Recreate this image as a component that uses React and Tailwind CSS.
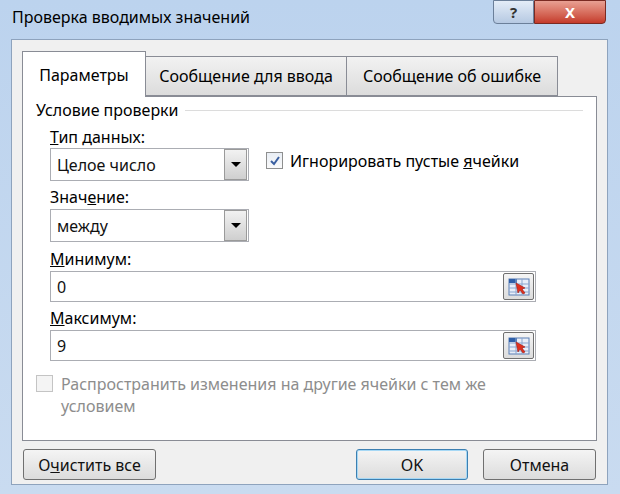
export default function App() {
  const Combo = ({ value }) => (
    <div className="flex w-[199px] h-[33px] border border-[#abadb3] bg-white items-center">
      <span className="flex-1 pl-[6px] text-[16px] text-[#111]">{value}</span>
      <div className="w-[23px] h-[31px] mr-[1px] border border-[#9a9a9a] bg-gradient-to-b from-[#f2f2f2] to-[#cfcfcf] flex items-center justify-center">
        <div className="w-0 h-0 border-l-[5px] border-r-[5px] border-t-[5px] border-l-transparent border-r-transparent border-t-black" />
      </div>
    </div>
  );
  const RangeBtn = () => (
    <div className="w-[31px] h-[27px] border border-[#707070] rounded-[2px] bg-gradient-to-b from-[#f5f5f5] to-[#dcdcdc] flex items-center justify-center mr-[1px]">
      <svg width="22" height="18" viewBox="0 0 22 18">
        <rect x="1" y="1" width="20" height="16" fill="#e8eef8" stroke="#5a7fb5" strokeWidth="1" />
        <rect x="1" y="1" width="8" height="4" fill="#2f5fa8" />
        <path d="M1 6h20M1 10h20M1 14h20M8 1v16M14 1v16" stroke="#8aa6cf" strokeWidth="1" />
        <path d="M8 5l9 5-3 1 3 4-2 1-3-4-2 3z" fill="#e0301e" stroke="#a01a10" strokeWidth="0.6" />
      </svg>
    </div>
  );
  const Input = ({ value }) => (
    <div className="flex w-[486px] h-[31px] border border-[#abadb3] bg-white items-center">
      <span className="flex-1 pl-[6px] text-[16px] text-[#111]">{value}</span>
      <RangeBtn />
    </div>
  );
  const Btn = ({ children, w, focus }) => (
    <div className={`h-[31px] ${w} rounded-[3px] border ${focus ? "border-[#3c7fb1] shadow-[inset_0_0_0_1px_#a6d8f5]" : "border-[#707070]"} bg-gradient-to-b from-[#f4f4f4] to-[#dcdcdc] flex items-center justify-center text-[16px] text-[#111]`}>
      {children}
    </div>
  );
  return (
    <div className="w-[620px] h-[494px] bg-gradient-to-b from-[#bcd3ee] to-[#c9dbf0] relative overflow-hidden" style={{ fontFamily: '"Noto Sans", "Open Sans", sans-serif' }}>
      <div className="h-[40px] flex items-start">
        <span className="pl-[12px] pt-[5px] text-[16px] text-black">Проверка вводимых значений</span>
        <div className="ml-auto flex mr-[14px]">
          <div className="w-[41px] h-[24px] border border-[#6b7f99] rounded-bl-[4px] bg-gradient-to-b from-[#e4edf8] to-[#b6c9e2] flex items-center justify-center text-[15px] text-[#333] font-bold">?</div>
          <div className="w-[72px] h-[24px] border border-[#7a2a22] rounded-br-[4px] bg-gradient-to-b from-[#e8a093] to-[#c4392a] flex items-center justify-center text-white font-bold text-[15px]">X</div>
        </div>
      </div>
      <div className="absolute left-[11px] top-[39px] w-[597px] h-[446px] border border-[#8ea3bd] bg-[#f0f0f0]">
        <div className="pl-[10px] pt-[10px] flex items-end h-[56px]">
          <div className="h-[46px] w-[124px] border border-b-0 border-[#898c95] bg-white flex items-center justify-center text-[16px] relative z-10 -mb-px">Параметры</div>
          <div className="h-[40px] w-[201px] border border-l-0 border-[#898c95] bg-gradient-to-b from-[#f2f2f2] to-[#dcdcdc] flex items-center justify-center text-[16px]">Сообщение для ввода</div>
          <div className="h-[40px] w-[211px] border border-l-0 border-[#898c95] bg-gradient-to-b from-[#f2f2f2] to-[#dcdcdc] flex items-center justify-center text-[16px]">Сообщение об ошибке</div>
        </div>
        <div className="mx-[10px] h-[345px] border border-[#898c95] bg-white px-[13px] pt-[1px]">
          <div className="flex items-center gap-[6px] text-[16px] leading-[24px]">
            <span>Условие проверки</span>
            <div className="flex-1 h-px bg-[#dcdcdc]" />
          </div>
          <div className="pl-[14px] text-[16px]">
            <div className="mt-[4px] leading-[22px]"><u>Т</u>ип данных:</div>
            <div className="flex items-center">
              <Combo value="Целое число" />
              <div className="ml-[17px] flex items-center gap-[7px] -mt-[8px]">
                <div className="w-[17px] h-[17px] border border-[#8e8f8f] bg-gradient-to-b from-[#e9eef5] to-[#fafafa] flex items-center justify-center">
                  <svg width="12" height="12" viewBox="0 0 12 12"><path d="M2 6l3 3 5-7" fill="none" stroke="#3a5fa0" strokeWidth="2" /></svg>
                </div>
                <span>Игнорировать пустые <u>я</u>чейки</span>
              </div>
            </div>
            <div className="mt-[4px] leading-[24px]">Знач<u>е</u>ние:</div>
            <Combo value="между" />
            <div className="mt-[5px] leading-[24px]"><u>М</u>инимум:</div>
            <Input value="0" />
            <div className="mt-[4px] leading-[24px]"><u>М</u>аксимум:</div>
            <Input value="9" />
          </div>
          <div className="mt-[12px] flex items-start gap-[8px] text-[16px] text-[#8d8d8d] leading-[22px]">
            <div className="mt-[2px] w-[17px] h-[17px] border border-[#c4c4c4] bg-[#f4f4f4] shrink-0" />
            <span>Распространить изменения на другие ячейки с тем же<br />условием</span>
          </div>
        </div>
        <div className="flex px-[11px] mt-[8px]">
          <Btn w="w-[133px]">О<u>ч</u>истить все</Btn>
          <div className="ml-auto flex gap-[15px]">
            <Btn w="w-[112px]" focus>OK</Btn>
            <Btn w="w-[113px]">Отмена</Btn>
          </div>
        </div>
      </div>
    </div>
  );
}
